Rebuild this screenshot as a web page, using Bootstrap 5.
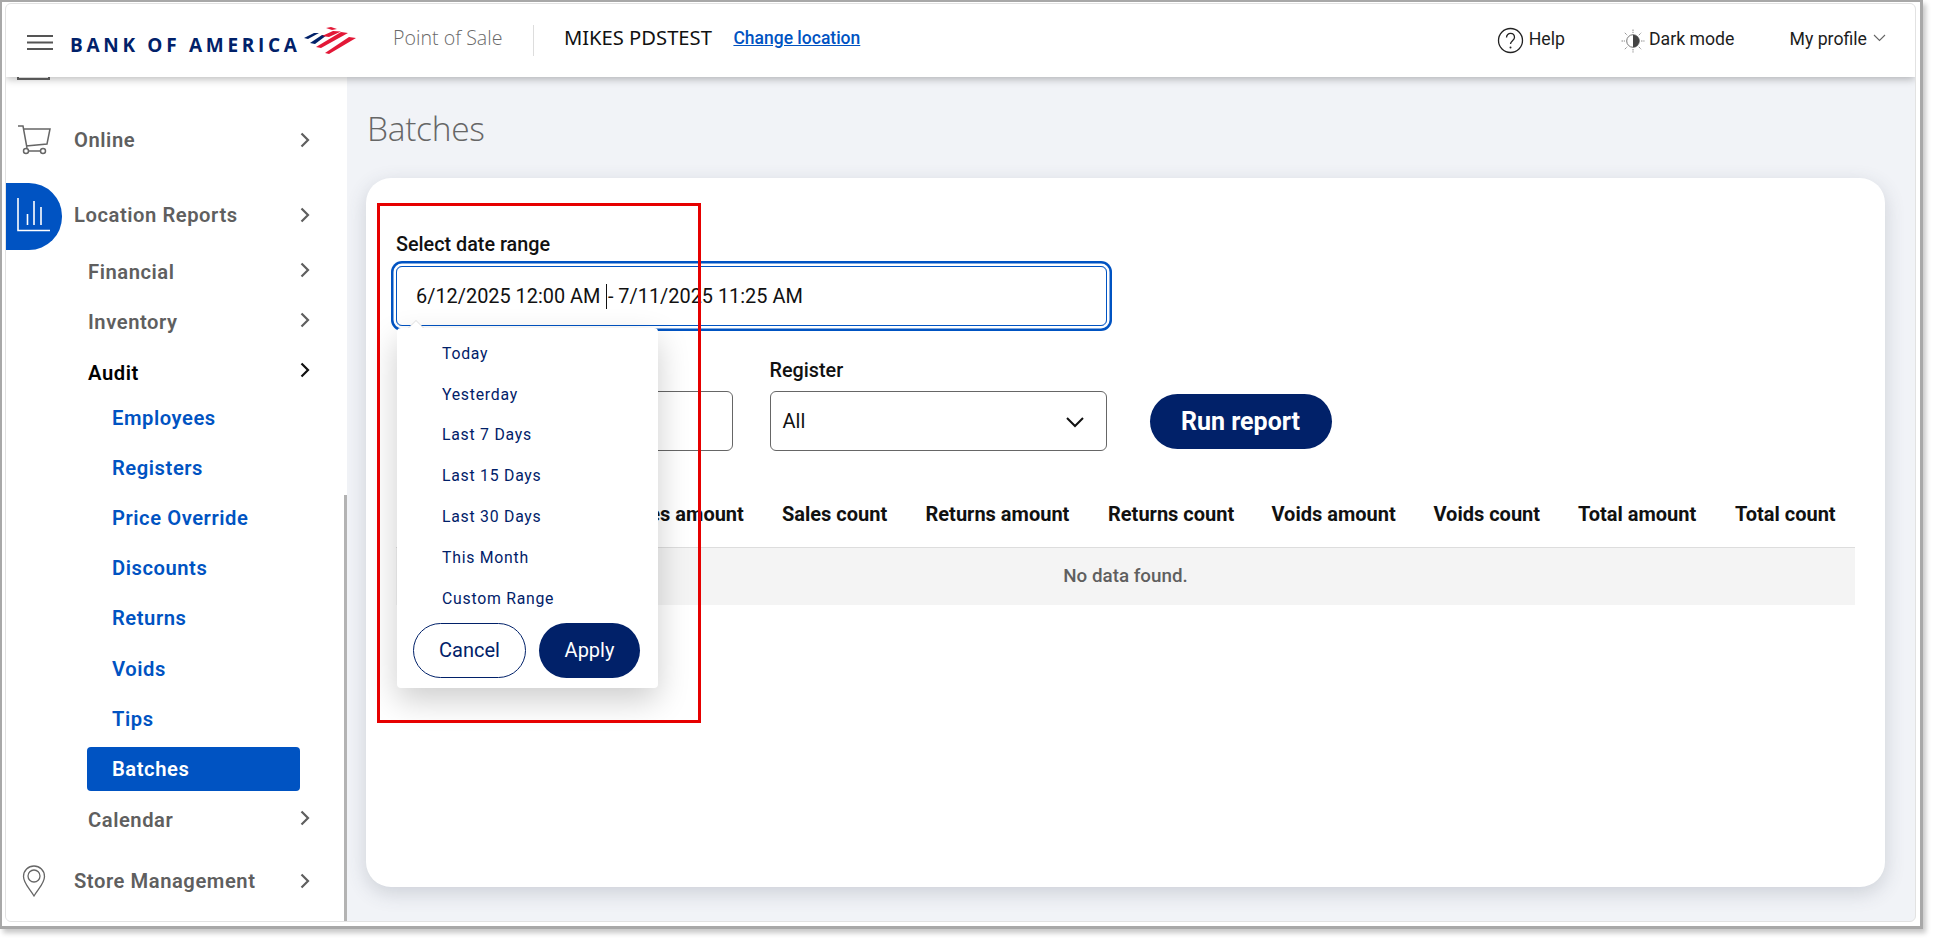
<!DOCTYPE html>
<html lang="en">
<head>
  <meta charset="UTF-8">
  <title>Batches</title>
  <link href="https://cdn.jsdelivr.net/npm/bootstrap@5.3.0/dist/css/bootstrap.min.css" rel="stylesheet">
  <style>
    html, body { height: 100%; }
    body { background: #fff; font-family: Roboto, "Liberation Sans", sans-serif; overflow: hidden; }
    .shot-frame { width: 1923px; height: 929px; border: solid #a8a8a8; border-width: 2px 3px 3px 2px; padding: 1px 4px 4px 3px; box-shadow: 3px 4px 5px rgba(0,0,0,.22); position: relative; }
    .app-page { height: 100%; background: #f1f3f7; border-radius: 6px; border: 1px solid #e2e2e2; overflow: hidden; }
    .top-bar { height: 73px; flex: none; background: #fff; box-shadow: 0 2px 8px rgba(0,0,0,.28); position: relative; z-index: 5; padding-left: 21px; }
    .logo-text { color: #012169; font-weight: 700; font-size: 19px; letter-spacing: 3.7px; margin: 10px 0 0 17px; white-space: nowrap; font-family: "Open Sans", Roboto, sans-serif; }
    .pos-name { color: #6a6a6a; font-size: 19.6px; font-family: "Open Sans", sans-serif; font-weight: 300; margin-left: 35px; padding: 0 30.5px 5px 0; line-height: 26px; border-right: 1px solid #ddd; }
    .store-name { color: #111; font-size: 20.2px; margin: -6px 0 0 30px; font-family: "Noto Sans", sans-serif; font-weight: 400; }
    .change-link { color: #0053c2; font-size: 17.5px; font-weight: 500; margin: -4px 0 0 21.5px; }
    .top-link { color: #1d1d1d; font-size: 17.7px; margin-top: -3px; }
    .side-nav { width: 341px; background: #fff; flex: none; overflow: hidden; position: relative; }
    .side-scroll { position: absolute; right: 0; top: 418px; bottom: 0; width: 3px; background: #b3b3b3; }
    .cut-icon { width: 33px; height: 3px; border: 2px solid #666; border-top: 0; margin-left: 11px; }
    .nav-row { display: flex; align-items: center; font-size: 20.2px; font-weight: 600; letter-spacing: .55px; color: #5f5f5f; text-decoration: none; white-space: nowrap; }
    .nav-row svg.go { position: absolute; left: 294px; }
    .nav-top { height: 64px; padding-left: 68px; position: relative; }
    .nav-top svg.ic { position: absolute; left: 11px; }
    .nav-reports { height: 67px; padding-bottom: 3px; margin-top: 11px; }
    .nav-store { margin-top: 3.75px; }
    .nav-sub { height: 50.3px; padding-left: 82px; position: relative; }
    .nav-sub svg.go { margin-top: -5px; }
    .nav-sub-first { margin-top: -3px; }
    .nav-leaf { height: 50.2px; margin-left: 81px; padding-left: 25px; color: #0053c2; width: 213px; }
    .nav-leaf-first { margin-top: -5.1px; }
    .nav-leaf.active { height: 44px; margin-top: 3px; margin-bottom: 4.25px; background: #0053c2; color: #fff; border-radius: 4px; }
    .report-blob { position: absolute; left: 0; top: 0; width: 56px; height: 67px; background: #0053c2; border-radius: 0 33px 33px 0; }
    .page-head { color: #666; font-size: 33.5px; font-family: "Open Sans", sans-serif; font-weight: 300; letter-spacing: -.3px; margin: 25.5px 0 0 20px; line-height: 50px; }
    .report-card { height: 709px; margin: 25px 30px 0 19px; background: #fff; border-radius: 25px; box-shadow: 0 6px 20px rgba(60,70,90,.2); padding: 56.5px 30px 0 30px; border: 0; }
    .field-label { font-size: 19.8px; font-weight: 500; color: #111; margin-bottom: 9.5px; line-height: 22px; height: 22px; white-space: nowrap; }
    .range-box { width: 711px; height: 60px; border: 1px solid #0053c2; box-shadow: 0 0 0 2.5px #fff, 0 0 0 5px #0053c2; border-radius: 6px; padding: 2px 0 0 19px; font-size: 19.9px; color: #111; }
    .text-caret { display: inline-block; width: 1px; height: 25px; background: #111; margin: 0 .5px 0 6px; vertical-align: -6px; }
    .filter-box { height: 60px; border: 1px solid #666; border-radius: 6px; padding: 0 22px 0 12px; font-size: 20px; color: #111; background: #fff; }
    .filter-first { width: 334.5px; margin-left: 2px; }
    .filter-reg { width: 337px; margin-left: 37px; }
    .filter-row .field-label { margin-bottom: 9px; }
    .run-btn { background: #012169; color: #fff; border: 0; border-radius: 28px; font-size: 25px; font-weight: 700; width: 182px; height: 55px; margin: 0 0 2px 43px; padding: 2px 0 0; }
    .run-btn:hover { background: #012169; color: #fff; }
    .filter-row { margin-top: 34px; }
    .batch-table { margin: 35px 0 0; width: 1459px; table-layout: fixed; }
    .batch-table th { font-size: 20px; font-weight: 700; color: #111; padding: 0 0 4px 19px; height: 62px; vertical-align: middle; white-space: nowrap; border-bottom: 1px solid #ddd; text-align: left; }
    .batch-table th:nth-child(1) { width: 206px; }
    .batch-table th:nth-child(2) { width: 161px; }
    .batch-table th:nth-child(3) { width: 143.5px; }
    .batch-table th:nth-child(4) { width: 182.5px; }
    .batch-table th:nth-child(5) { width: 163.5px; }
    .batch-table th:nth-child(6) { width: 162px; }
    .batch-table th:nth-child(7) { width: 144.5px; }
    .batch-table th:nth-child(8) { width: 157px; }
    .batch-table td { background: #f4f4f4; color: #5f5f5f; font-size: 18.8px; font-weight: 500; height: 57.5px; vertical-align: middle; text-align: center; border: 0; }
    .range-menu { position: absolute; left: 395px; top: 326px; width: 261px; height: 360px; background: #fff; border-radius: 4px; box-shadow: 0 12px 32px rgba(0,0,0,.2); z-index: 3; }
    .range-menu::before { content: ""; position: absolute; left: 11px; top: -7px; border: 8px solid transparent; border-top: 0; border-bottom-color: #fff; filter: drop-shadow(0 -1px 0 #ddd); }
    .range-spacer { height: 5.3px; }
    .range-item { height: 40.8px; display: flex; align-items: center; padding-left: 45px; color: #012169; font-size: 15.8px; letter-spacing: .75px; }
    .range-btns { gap: 13px; padding: 3.7px 0 0 16px; }
    .range-cancel { width: 113px; height: 55px; border-radius: 28px; border: 1px solid #012169; color: #012169; background: #fff; font-size: 20px; padding: 0; }
    .range-apply { width: 101px; height: 55px; border-radius: 28px; border: 0; color: #fff; background: #012169; font-size: 20px; padding: 0; }
    .range-apply:hover { background: #012169; color: #fff; }
    .mark-box { position: absolute; left: 375px; top: 201px; width: 324px; height: 520px; border: 3px solid #e60000; z-index: 4; pointer-events: none; }
  </style>
</head>
<body>
<div class="shot-frame">
  <div class="app-page d-flex flex-column">
    <header class="top-bar d-flex align-items-center">
      <svg width="26" height="17" viewBox="0 0 26 17" class="mt-1"><path d="M0 2h26M0 8.500h26M0 15h26" stroke="#555" stroke-width="2.200"/></svg>
      <span class="logo-text">BANK OF AMERICA</span>
      <svg width="56" height="30" viewBox="303 25 56 30" style="margin-left:1.500px;flex:none">
        <path d="M305 37l10-5h5l-11 6Z" fill="#012169"/>
        <path d="M311 42l12-8h5l-12 9Z" fill="#012169"/>
        <path d="M327 27l5-1 6 2-5 1Z" fill="#e31837"/>
        <path d="M323 35l11-5 8 .5-12 5.500Z" fill="#e31837"/>
        <path d="M317 46l25-15 7 1-27 15Z" fill="#e31837"/>
        <path d="M326 52l24-16 7 1-27 16Z" fill="#e31837"/>
      </svg>
      <span class="pos-name">Point of Sale</span>
      <span class="store-name">MIKES PDSTEST</span>
      <a href="#" class="change-link">Change location</a>
      <div class="ms-auto d-flex align-items-center">
        <svg width="27" height="27" viewBox="0 0 27 27"><circle cx="13.500" cy="13.500" r="12" fill="none" stroke="#222" stroke-width="1.300"/><path d="M9.500 10.500c0-5.500 8-5.500 8 0 0 3-4 3.500-4 6.500" fill="none" stroke="#222" stroke-width="1.300"/><circle cx="13.500" cy="20.500" r="1" fill="#222"/></svg>
        <span class="top-link" style="margin-left:5px">Help</span>
        <svg width="24" height="24" viewBox="0 0 24 24" style="margin-left:56px"><circle cx="12" cy="12" r="6.300" fill="#fff" stroke="#777"/><path d="M12 5.700a6.300 6.300 0 0 1 0 12.600Z" fill="#444"/><path d="M12 .5v3.500M12 20v3.500M.5 12H4M20 12h3.500M3.800 3.800l2.400 2.400M17.800 17.800l2.400 2.400M3.800 20.200l2.400-2.400M17.800 6.200l2.400-2.400" stroke="#888" stroke-width="1" stroke-dasharray="1.500 .8"/></svg>
        <span class="top-link ms-1">Dark mode</span>
        <span class="top-link" style="margin-left:55px">My profile</span>
        <svg width="13" height="8" viewBox="0 0 13 8" style="margin:-5px 29.500px 0 5.500px"><path d="M1 1l5.500 5.500L12 1" fill="none" stroke="#666" stroke-width="1.100"/></svg>
      </div>
    </header>
    <div class="d-flex flex-grow-1" style="min-height:0">
      <nav class="side-nav">
        <div class="cut-icon"></div>
        <div style="height:28px"></div>
        <a class="nav-row nav-top" href="#">
          <svg class="ic" width="34" height="30" viewBox="0 0 34 30"><path d="M1 1h5l4 22M6.500 4H33l-3 15-21 2M11 26h13" fill="none" stroke="#666" stroke-width="1.500"/><circle cx="9" cy="26" r="2.500" fill="none" stroke="#666" stroke-width="1.500"/><circle cx="26" cy="26" r="2.500" fill="none" stroke="#666" stroke-width="1.500"/></svg>
          Online
          <svg class="go" width="10" height="16" viewBox="0 0 10 16"><path d="M1.500 1.500 8 8l-6.500 6.500" fill="none" stroke="#5f5f5f" stroke-width="2.200"/></svg>
        </a>
        <a class="nav-row nav-top nav-reports" href="#">
          <span class="report-blob"></span>
          <svg class="ic" width="34" height="34" viewBox="0 0 34 34"><path d="M1 0v32.500h32M10.500 27V16M17 27V3M24 27V9" fill="none" stroke="#fff" stroke-width="1.600"/></svg>
          Location Reports
          <svg class="go" width="10" height="16" viewBox="0 0 10 16"><path d="M1.500 1.500 8 8l-6.500 6.500" fill="none" stroke="#5f5f5f" stroke-width="2.200"/></svg>
        </a>
        <a class="nav-row nav-sub nav-sub-first" href="#">Financial<svg class="go" width="10" height="16" viewBox="0 0 10 16"><path d="M1.500 1.500 8 8l-6.500 6.500" fill="none" stroke="#5f5f5f" stroke-width="2.200"/></svg></a>
        <a class="nav-row nav-sub" href="#">Inventory<svg class="go" width="10" height="16" viewBox="0 0 10 16"><path d="M1.500 1.500 8 8l-6.500 6.500" fill="none" stroke="#5f5f5f" stroke-width="2.200"/></svg></a>
        <a class="nav-row nav-sub text-black" href="#">Audit<svg class="go" width="10" height="16" viewBox="0 0 10 16"><path d="M1.500 1.500 8 8l-6.500 6.500" fill="none" stroke="#111" stroke-width="2.200"/></svg></a>
        <a class="nav-row nav-leaf nav-leaf-first" href="#">Employees</a>
        <a class="nav-row nav-leaf" href="#">Registers</a>
        <a class="nav-row nav-leaf" href="#">Price Override</a>
        <a class="nav-row nav-leaf" href="#">Discounts</a>
        <a class="nav-row nav-leaf" href="#">Returns</a>
        <a class="nav-row nav-leaf" href="#">Voids</a>
        <a class="nav-row nav-leaf" href="#">Tips</a>
        <a class="nav-row nav-leaf active" href="#">Batches</a>
        <a class="nav-row nav-sub" href="#">Calendar<svg class="go" width="10" height="16" viewBox="0 0 10 16"><path d="M1.500 1.500 8 8l-6.500 6.500" fill="none" stroke="#5f5f5f" stroke-width="2.200"/></svg></a>
        <a class="nav-row nav-top nav-store" href="#">
          <svg class="ic" width="24" height="32" viewBox="0 0 24 32" style="left:16px"><path d="M12 31C7 23 1.500 18 1.500 11.500a10.500 10.500 0 0 1 21 0C22.500 18 17 23 12 31Z" fill="none" stroke="#666" stroke-width="1.300"/><circle cx="12" cy="11" r="6" fill="none" stroke="#666" stroke-width="1.300"/></svg>
          Store Management
          <svg class="go" width="10" height="16" viewBox="0 0 10 16"><path d="M1.500 1.500 8 8l-6.500 6.500" fill="none" stroke="#5f5f5f" stroke-width="2.200"/></svg>
        </a>
        <div class="side-scroll"></div>
      </nav>
      <main class="flex-grow-1" style="min-width:0">
        <div class="page-head">Batches</div>
        <div class="card report-card">
          <div class="field-label">Select date range</div>
          <div class="range-box d-flex align-items-center"><span>6/12/2025 12:00 AM<span class="text-caret"></span>- 7/11/2025 11:25 AM</span></div>
          <div class="d-flex align-items-end filter-row">
            <div class="filter-first">
              <div class="field-label"></div>
              <div class="filter-box"></div>
            </div>
            <div class="filter-reg">
              <div class="field-label">Register</div>
              <div class="filter-box d-flex align-items-center justify-content-between">All
                <svg width="18" height="11" viewBox="0 0 18 11" style="margin-top:4px"><path d="M1 1l8 8 8-8" fill="none" stroke="#111" stroke-width="2"/></svg>
              </div>
            </div>
            <button class="btn run-btn">Run report</button>
          </div>
          <table class="table batch-table">
            <thead><tr>
              <th></th><th>Sales amount</th><th>Sales count</th><th>Returns amount</th><th>Returns count</th><th>Voids amount</th><th>Voids count</th><th>Total amount</th><th>Total count</th>
            </tr></thead>
            <tbody><tr><td colspan="9">No data found.</td></tr></tbody>
          </table>
        </div>
      </main>
    </div>
  </div>
  <div class="range-menu">
    <div class="range-spacer"></div>
    <div class="range-item">Today</div>
    <div class="range-item">Yesterday</div>
    <div class="range-item">Last 7 Days</div>
    <div class="range-item">Last 15 Days</div>
    <div class="range-item">Last 30 Days</div>
    <div class="range-item">This Month</div>
    <div class="range-item">Custom Range</div>
    <div class="d-flex range-btns">
      <button class="btn range-cancel">Cancel</button>
      <button class="btn range-apply">Apply</button>
    </div>
  </div>
  <div class="mark-box"></div>
</div>
<script src="https://cdn.jsdelivr.net/npm/bootstrap@5.3.0/dist/js/bootstrap.bundle.min.js"></script>
</body>
</html>
